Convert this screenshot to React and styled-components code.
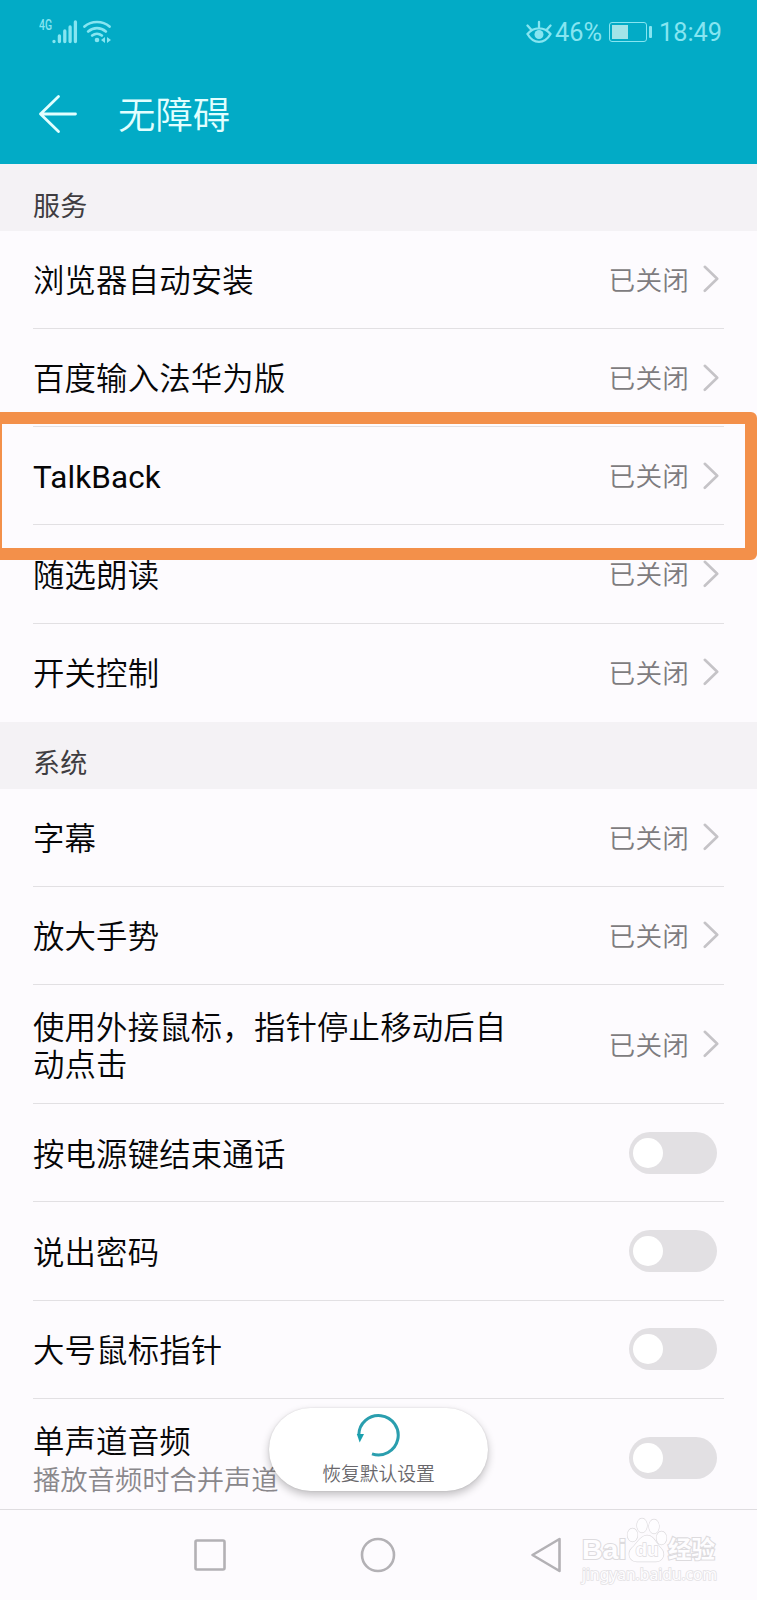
import styled, {createGlobalStyle} from "styled-components"

const GlobalStyle = createGlobalStyle`
  *{
    box-sizing: border-box;
  }
  body{
    margin: 0;
    background-color: #fdfbfe;
    font-family: Roboto, "Noto Sans CJK SC", sans-serif;
  }
`

const Screen = styled.div`
  position: relative;
  width: 757px;
  height: 1600px;
  overflow: hidden;
  display: flex;
  flex-direction: column;
  background-color: #fdfbfe;
`

const Header = styled.header`
  height: 164px;
  flex-shrink: 0;
  background-color: #02abc6;
  color: #e2ffff;
`

const StatusBar = styled.div`
  height: 64px;
  padding: 0 35px 0 39px;
  display: flex;
  justify-content: space-between;
  align-items: center;
  color: #86e5f1;
  svg{
    display: block;
  }
`

const StatusGroup = styled.div`
  display: flex;
  align-items: center;
`

const WifiWrap = styled.div`
  margin-left: 5px;
`

const Network = styled.span`
  align-self: flex-start;
  width: 13px;
  font-size: 14.5px;
  font-weight: 500;
  line-height: 12px;
  transform: scaleX(.72);
  transform-origin: 0 50%;
`

const StatusText = styled.span`
  padding-top: 1px;
  font-size: 25.3px;
  line-height: 30px;
  margin-left: ${props => props.$gap}px;
`

const Battery = styled.div`
  width: 38px;
  height: 20px;
  margin-left: 7px;
  padding: 2px;
  border: 1px solid currentColor;
  border-radius: 3px;
  div{
    width: 16px;
    height: 14px;
    background-color: #a3e4e8;
  }
`

const BatteryTip = styled.div`
  width: 3px;
  height: 12px;
  margin-left: 2px;
  border-radius: 1px;
  background-color: currentColor;
`

const TitleBar = styled.div`
  height: 100px;
  padding-left: 38px;
  display: flex;
  align-items: center;
  h1{
    margin: 0 0 2px 40px;
    font-family: "Noto Sans CJK SC", sans-serif;
    font-size: 37.4px;
    font-weight: 350;
    line-height: 50px;
  }
`

const SectionTitle = styled.h2`
  height: 66.8px;
  flex-shrink: 0;
  margin: 0;
  padding: 15.5px 33px 0;
  font-size: 27px;
  font-weight: 400;
  line-height: 54px;
  letter-spacing: .3px;
  color: #3f3d41;
  background-color: #f4f2f5;
`

const Row = styled.div`
  position: relative;
  height: ${props => props.$height || 98.2}px;
  flex-shrink: 0;
  margin: 0 33px;
  display: flex;
  justify-content: space-between;
  align-items: center;
  border-bottom: 1px solid ${props => props.$last ? "transparent" : "#e2e0e3"};
`

const Label = styled.div`
  max-width: 490px;
  padding-top: ${props => props.$top || 5}px;
  font-size: 31.4px;
  font-weight: ${props => props.$latin ? 400 : 350};
  line-height: 37.5px;
  letter-spacing: .17px;
  color: #060607;
  small{
    display: block;
    font-size: 27.3px;
    line-height: 40px;
    letter-spacing: 0;
    color: #89878b;
  }
`

const Value = styled.div`
  display: flex;
  align-items: center;
  gap: 14px;
  margin-right: 5px;
  font-size: 26.6px;
  font-weight: 350;
  line-height: 36px;
  color: #7e7c80;
  span{
    padding-top: 3px;
    letter-spacing: .2px;
  }
`

const Toggle = styled.div`
  width: 88px;
  height: 42px;
  margin-right: 7px;
  padding: 6px 4px;
  border-radius: 21px;
  background-color: #e2e0e3;
  &::before{
    content: "";
    display: block;
    width: 30px;
    height: 30px;
    border-radius: 50%;
    background-color: white;
  }
`

const Highlight = styled.div`
  position: absolute;
  z-index: 1;
  top: -15.5px;
  left: -43px;
  width: 767px;
  height: 148px;
  border: 12.5px solid #f3904a;
  border-radius: 6px;
`

// the last row runs under the nav bar, so the list clips it
const SystemList = styled.div`
  height: 720.4px;
  flex-shrink: 0;
  overflow: hidden;
`

const ResetButton = styled.button`
  position: absolute;
  z-index: 2;
  left: 269px;
  top: 1408px;
  width: 219px;
  height: 83px;
  padding: 5px 0 0;
  display: flex;
  flex-direction: column;
  align-items: center;
  border: none;
  border-radius: 42px;
  background-color: white;
  box-shadow: 0 4px 9px rgba(0, 0, 0, .24), 0 0 2px rgba(0, 0, 0, .12);
  font-family: inherit;
  font-size: 18.8px;
  font-weight: 350;
  line-height: 28px;
  color: #69676b;
  svg{
    display: block;
    margin: 0 1px 4px 0;
  }
`

const NavBar = styled.nav`
  position: relative;
  height: 91px;
  margin-top: auto;
  flex-shrink: 0;
  padding: 0 196px 0 194px;
  display: flex;
  justify-content: space-between;
  align-items: center;
  border-top: 1px solid #dfdde0;
  background-color: #fdfbfe;
`

const Watermark = styled.div`
  position: absolute;
  left: 582px;
  top: 1517px;
  width: 140px;
  color: #fefdff;
  -webkit-text-stroke: 2.2px #dddbde;
  paint-order: stroke fill;
`

const Brand = styled.div`
  height: 47px;
  display: flex;
  align-items: flex-end;
  font-family: "Liberation Sans", "Noto Sans CJK SC", sans-serif;
  font-weight: 700;
  line-height: 30px;
  span:first-child{
    width: 44px;
    font-size: 28.5px;
  }
  span:last-child{
    font-size: 23.5px;
    line-height: 28px;
  }
`

const Site = styled.div`
  font-family: "Noto Sans", sans-serif;
  font-size: 15.6px;
  line-height: 20px;
  -webkit-text-stroke: 1.6px #e3e1e4;
`

function Signal(){
  return (
    <svg width="26" height="24" viewBox="0 0 26 24" stroke="currentColor" strokeWidth="3.3" strokeLinecap="round">
      <path d="M2 21.3v.2M7.4 16v5.5M12.8 11v10.5M18.1 7v14.5M23.4 2v19.5"/>
    </svg>
  )
}

function Wifi(){
  return (
    <svg width="28" height="24" viewBox="0 0 28 24" fill="none" stroke="currentColor" strokeWidth="2.7" strokeLinecap="round">
      <path d="M1.5 6.5C8.5.5 19.5.5 26.5 6.5M5.2 11.5C10.5 7 17.5 7 22.8 11.5M9.2 15.5C12 13.3 16 13.3 18.8 15.5"/>
      <circle cx="14" cy="20" r="2.3" fill="currentColor" stroke="none"/>
      <path d="M22 17v6l-4-3zM24 17v6l4-3z" fill="currentColor" stroke="none"/>
    </svg>
  )
}

function Eye(){
  return (
    <svg width="26" height="24" viewBox="0 0 26 24" fill="none" stroke="currentColor" strokeWidth="2.3" strokeLinecap="round">
      <path d="M1.5 14C7.5 6.5 18.5 6.5 24.5 14C18.5 24.5 7.5 24.5 1.5 14zM13 2v5M1.5 5.5l4 4.5M24.5 5.5l-4 4.5"/>
      <circle cx="13" cy="14.5" r="4.5" fill="currentColor" stroke="none"/>
    </svg>
  )
}

function BackArrow(){
  return (
    <svg width="40" height="40" viewBox="0 0 40 40" fill="none" stroke="currentColor" strokeWidth="2.8" strokeLinecap="round" strokeLinejoin="round">
      <path d="M20.5 2.5L2.5 20L20.5 37.5M2.5 20H37.5"/>
    </svg>
  )
}

function Chevron(){
  return (
    <svg width="16" height="28" viewBox="0 0 16 28" fill="none" stroke="#c5c3c7" strokeWidth="2.6" strokeLinecap="round" strokeLinejoin="round">
      <path d="M1.8 1.8L14.2 13.8L1.8 25.8"/>
    </svg>
  )
}

function ResetIcon(){
  return (
    <svg width="44" height="44" viewBox="0 0 44 44">
      <path d="M2.8 22A19.7 19.7 0 1 1 16 40.8" fill="none" stroke="#2a9eae" strokeWidth="3"/>
      <path d="M.8 21h7.2l-4.300 8.500z" fill="#1aa0ae"/>
    </svg>
  )
}

function NavIcons(){
  return (
    <>
      <svg width="32" height="32" viewBox="0 0 32 32" fill="none" stroke="#b3b1b5" strokeWidth="2.6">
        <rect x="1.5" y="1.5" width="29" height="29" rx="1.5"/>
      </svg>
      <svg width="36" height="36" viewBox="0 0 36 36" fill="none" stroke="#b3b1b5" strokeWidth="2.6">
        <circle cx="18" cy="18" r="16"/>
      </svg>
      <svg width="31" height="36" viewBox="0 0 31 36" fill="none" stroke="#b3b1b5" strokeWidth="2.6" strokeLinejoin="round">
        <path d="M29.5 2V34L2.5 18z"/>
      </svg>
    </>
  )
}

function Paw(){
  return (
    <svg width="42" height="47" viewBox="0 0 42 47" fill="#fefdff" stroke="#dddbde" strokeWidth="1.3">
      <ellipse cx="6.5" cy="18" rx="5" ry="6.5"/>
      <ellipse cx="16" cy="8.5" rx="5" ry="7"/>
      <ellipse cx="28" cy="9.5" rx="5" ry="7"/>
      <ellipse cx="35.5" cy="21" rx="5" ry="6.5"/>
      <path d="M21 18.500c7 0 9 8 14 13c5 5 2 13-5 13H11C3 44.500 1 36 6 31c5-4 8-12.500 15-12.500z"/>
      <text x="21" y="39" textAnchor="middle" fontFamily="Liberation Sans" fontSize="19" fontWeight="700">du</text>
    </svg>
  )
}

const services = ["浏览器自动安装", "百度输入法华为版", "TalkBack", "随选朗读", "开关控制"]

const system = [
  {name: "字幕"},
  {name: "放大手势"},
  {name: "使用外接鼠标，指针停止移动后自动点击", height: 119.4, top: 6},
  {name: "按电源键结束通话", toggle: true},
  {name: "说出密码", toggle: true},
  {name: "大号鼠标指针", toggle: true},
  {name: "单声道音频", note: "播放音频时合并声道", toggle: true, height: 119, top: 9},
]

function Off(){
  return (
    <Value>
      <span>已关闭</span>
      <Chevron/>
    </Value>
  )
}

export default function App(){
  return (
<>
  <GlobalStyle/>
  <Screen>
    <Header>
      <StatusBar>
        <StatusGroup>
          <Network>4G</Network>
          <Signal/>
          <WifiWrap><Wifi/></WifiWrap>
        </StatusGroup>
        <StatusGroup>
          <Eye/>
          <StatusText $gap={3.5}>46%</StatusText>
          <Battery><div/></Battery>
          <BatteryTip/>
          <StatusText $gap={7}>18:49</StatusText>
        </StatusGroup>
      </StatusBar>
      <TitleBar>
        <BackArrow/>
        <h1>无障碍</h1>
      </TitleBar>
    </Header>

    <SectionTitle>服务</SectionTitle>
    {services.map((name, i) => (
      <Row key={name} $last={i === services.length - 1}>
        <Label $latin={name === "TalkBack"} $top={name === "TalkBack" ? 3 : 5}>{name}</Label>
        <Off/>
        {name === "TalkBack" && <Highlight/>}
      </Row>
    ))}

    <SectionTitle>系统</SectionTitle>
    <SystemList>
      {system.map((item, i) => (
        <Row key={item.name} $height={item.height} $last={i === system.length - 1}>
          <Label $top={item.top}>
            {item.name}
            {item.note && <small>{item.note}</small>}
          </Label>
          {item.toggle ? <Toggle/> : <Off/>}
        </Row>
      ))}
    </SystemList>

    <NavBar>
      <NavIcons/>
    </NavBar>

    <ResetButton>
      <ResetIcon/>
      恢复默认设置
    </ResetButton>

    <Watermark>
      <Brand>
        <span>Bai</span>
        <Paw/>
        <span>经验</span>
      </Brand>
      <Site>jingyan.baidu.com</Site>
    </Watermark>
  </Screen>
</>
  )
}
